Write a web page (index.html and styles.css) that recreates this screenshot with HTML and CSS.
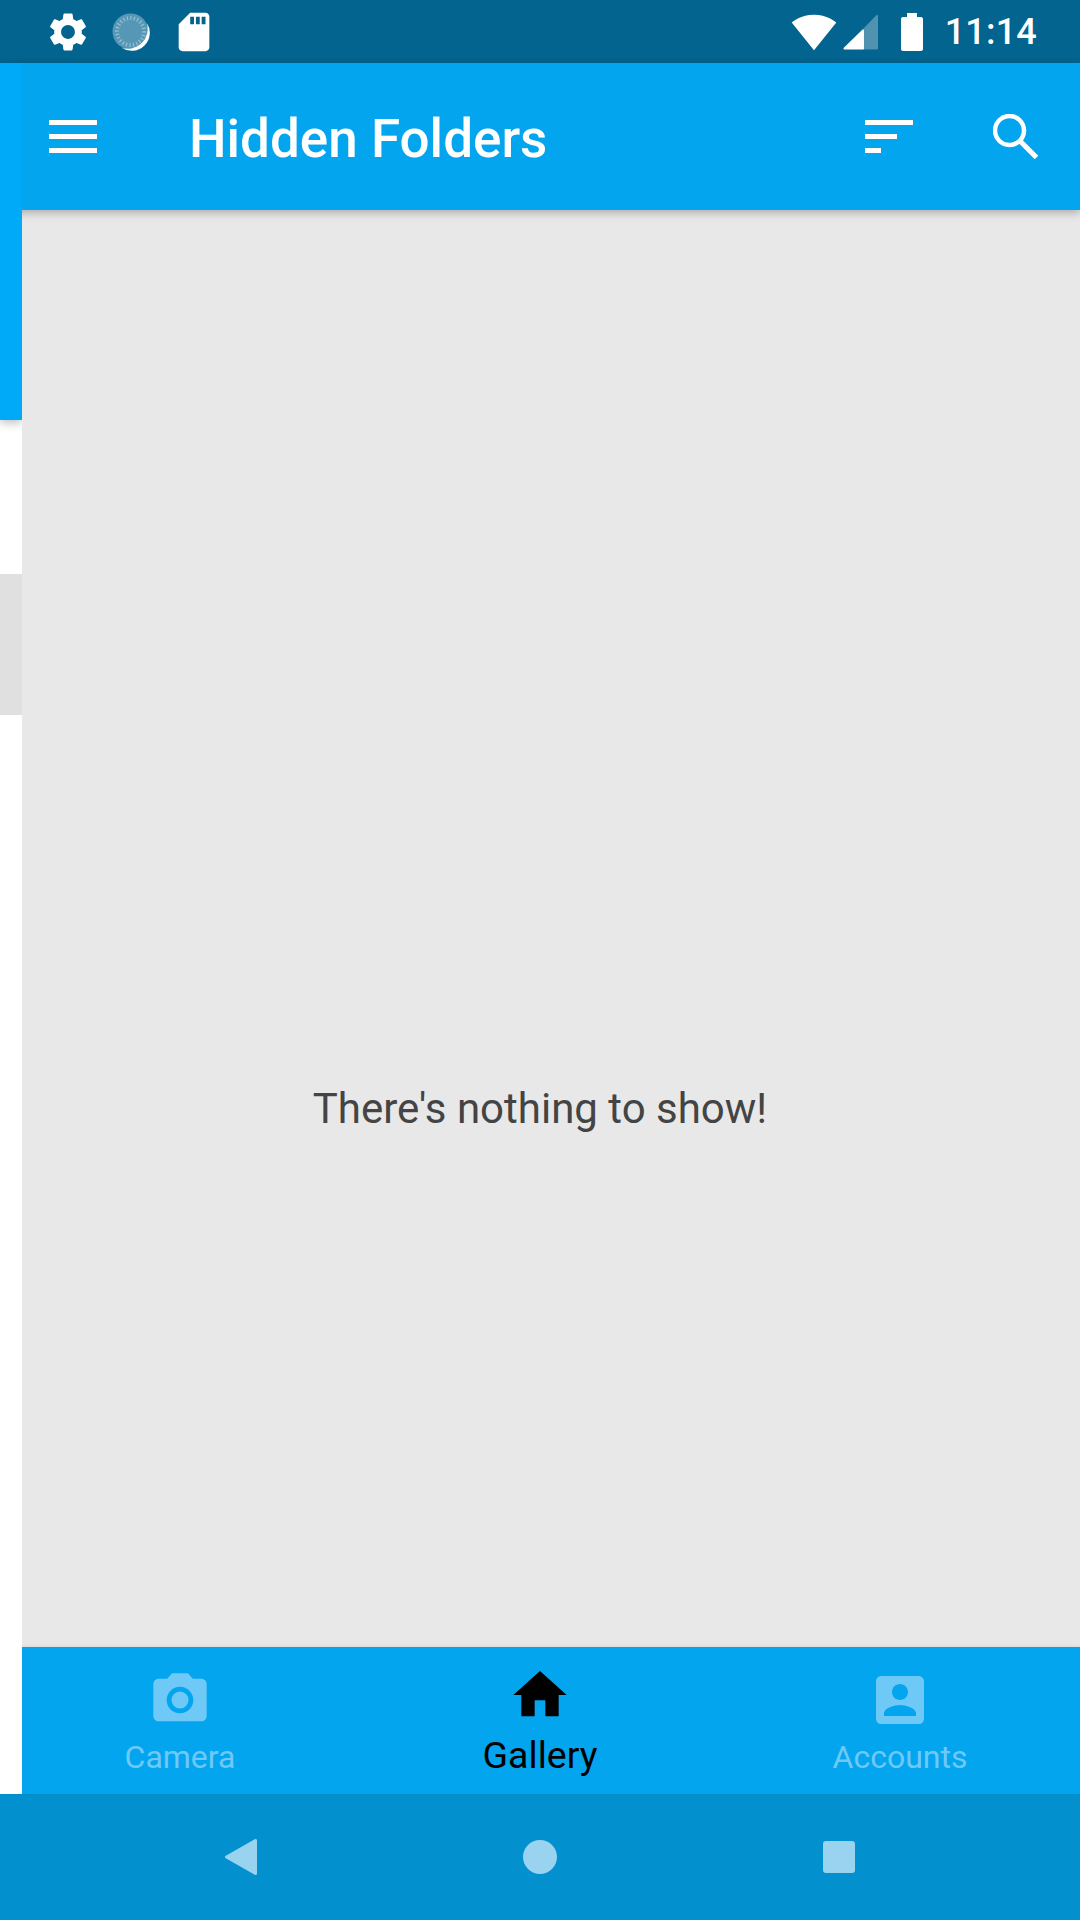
FILE: index.html
```html
<!DOCTYPE html>
<html lang="en">
    <head>
        <meta charset="UTF-8" />
        <meta name="viewport" content="width=device-width, initial-scale=1.0" />
        <title>Hidden Folders</title>
        <link rel="stylesheet" href="styles.css">
    </head>
    <body>
        <section class="screen">
            <header class="status-bar">
                <div class="status-left">
                    <svg class="status-icon" viewBox="0 0 24 24"><path d="M19.14 12.94c.04-.3.06-.61.06-.94 0-.32-.02-.64-.07-.94l2.03-1.58c.18-.14.23-.41.12-.61l-1.92-3.32c-.12-.22-.37-.29-.59-.22l-2.39.96c-.5-.38-1.03-.7-1.62-.94l-.36-2.54c-.04-.24-.24-.41-.48-.41h-3.84c-.24 0-.43.17-.47.41l-.36 2.54c-.59.24-1.13.57-1.62.94l-2.39-.96c-.22-.08-.47 0-.59.22L2.74 8.87c-.12.21-.08.47.12.61l2.03 1.58c-.05.3-.09.63-.09.94s.02.64.07.94l-2.03 1.58c-.18.14-.23.41-.12.61l1.92 3.32c.12.22.37.29.59.22l2.39-.96c.5.38 1.03.7 1.62.94l.36 2.54c.05.24.24.41.48.41h3.84c.24 0 .44-.17.47-.41l.36-2.54c.59-.24 1.13-.56 1.62-.94l2.39.96c.22.08.47 0 .59-.22l1.92-3.32c.12-.22.07-.47-.12-.61l-2.01-1.58zM12 15.6c-1.98 0-3.6-1.62-3.6-3.6s1.62-3.6 3.6-3.6 3.6 1.62 3.6 3.6-1.62 3.6-3.6 3.6z"/></svg>
                    <svg class="status-icon" viewBox="0 0 46 46">
                        <circle cx="22.500" cy="22.500" r="18" fill="#fff" opacity="0.33"/>
                        <path d="M38.700 13.700A18 18 0 0 1 13.700 38.700A19.800 19.800 0 0 0 38.700 13.700z"/>
                        <circle cx="22.500" cy="22.500" r="13.500" fill="none" stroke="#fff" stroke-width="4" stroke-dasharray="1.200 2.300" opacity="0.4"/>
                    </svg>
                    <svg class="status-icon" viewBox="0 0 24 24"><path d="M18 2h-8L4.02 8 4 20c0 1.1.9 2 2 2h12c1.1 0 2-.9 2-2V4c0-1.1-.9-2-2-2zm-6 6h-2V4h2v4zm3 0h-2V4h2v4zm3 0h-2V4h2v4z"/></svg>
                </div>
                <div class="status-right">
                    <svg class="wifi" viewBox="0 0 24 24"><path d="M12.01 21.49L23.64 7c-.45-.34-4.93-4-11.64-4C5.28 3 .81 6.66.36 7l11.63 14.49.01.01.01-.01z"/></svg>
                    <svg class="signal" viewBox="0 0 36 36">
                        <path d="M20 16.500L1.500 34.500H20z" stroke="#fff" stroke-width="2" stroke-linejoin="round"/>
                        <path d="M20 16.500L34 2v32.500H20z" stroke="#fff" stroke-width="2" stroke-linejoin="round" opacity="0.3"/>
                    </svg>
                    <svg class="battery" viewBox="0 0 22 38"><path d="M6 0h10v4h4c1.100 0 2 .9 2 2v30c0 1.100-.9 2-2 2H2c-1.100 0-2-.9-2-2V6c0-1.100.9-2 2-2h4z"/></svg>
                    <span class="clock">11:14</span>
                </div>
            </header>

            <div class="app">
                <div class="toolbar">
                    <div class="menu-icon">
                        <span class="bar"></span>
                        <span class="bar"></span>
                        <span class="bar"></span>
                    </div>
                    <h1>Hidden Folders</h1>
                    <div class="sort-icon">
                        <span class="bar"></span>
                        <span class="bar mid"></span>
                        <span class="bar short"></span>
                    </div>
                    <svg class="search-icon" viewBox="0 0 46 46">
                        <circle cx="16.500" cy="16.500" r="14.500" fill="none" stroke="#fff" stroke-width="4.500"/>
                        <path d="M27 27L43.500 43.500" fill="none" stroke="#fff" stroke-width="5"/>
                    </svg>
                </div>
                <main class="content">
                    <p>There's nothing to show!</p>
                </main>
                <nav class="tabs">
                    <div class="tab">
                        <svg viewBox="0 0 24 24"><circle cx="12" cy="12" r="3.200"/><path d="M9 2L7.170 4H4c-1.100 0-2 .9-2 2v12c0 1.100.9 2 2 2h16c1.100 0 2-.9 2-2V6c0-1.100-.9-2-2-2h-3.170L15 2H9zm3 15c-2.760 0-5-2.240-5-5s2.240-5 5-5 5 2.240 5 5-2.240 5-5 5z"/></svg>
                        <span>Camera</span>
                    </div>
                    <div class="tab active">
                        <svg viewBox="0 0 24 24"><path d="M10 20v-6h4v6h5v-8h3L12 3 2 12h3v8z"/></svg>
                        <span>Gallery</span>
                    </div>
                    <div class="tab">
                        <svg viewBox="0 0 24 24"><path d="M3 5v14c0 1.100.89 2 2 2h14c1.100 0 2-.9 2-2V5c0-1.100-.9-2-2-2H5c-1.110 0-2 .9-2 2zm12 4c0 1.660-1.340 3-3 3s-3-1.340-3-3 1.340-3 3-3 3 1.340 3 3zm-9 8c0-2 4-3.100 6-3.100s6 1.100 6 3.100v1H6v-1z"/></svg>
                        <span>Accounts</span>
                    </div>
                </nav>
                <!-- drawer nearly closed, only its edge is showing -->
                <aside class="drawer">
                    <div class="drawer-head"></div>
                    <div class="drawer-item"></div>
                </aside>
            </div>

            <footer class="nav-bar">
                <svg class="back" viewBox="0 0 32 36"><path d="M30.500 1.500V34.500L1.500 18z" stroke-width="3" stroke-linejoin="round"/></svg>
                <svg viewBox="0 0 36 36"><circle cx="18" cy="18" r="17"/></svg>
                <svg viewBox="0 0 36 36"><rect x="2" y="2" width="32" height="32" rx="3"/></svg>
            </footer>
        </section>
    </body>
</html>
```

FILE: styles.css
```css
* {
    padding: 0;
    margin: 0;
    box-sizing: border-box;
}
body {
    width: 1080px;
    height: 1920px;
    overflow: hidden;
    font-family: Roboto, "Noto Sans", sans-serif;
    background-color: #fff;
}
.screen {
    display: flex;
    flex-direction: column;
    height: 1920px;
}

/* status bar */
.status-bar {
    display: flex;
    justify-content: space-between;
    align-items: center;
    height: 63px;
    padding: 0 43px 0 45px;
    background-color: #02648f;
    fill: #fff;
}
.status-left,
.status-right {
    display: flex;
    align-items: center;
}
.status-left {
    gap: 17px;
}
.status-icon {
    width: 46px;
    height: 46px;
}
.wifi {
    width: 46px;
    height: 46px;
}
.signal {
    width: 36px;
    height: 36px;
    margin: 1px 0 0 6px;
}
.battery {
    width: 22px;
    height: 38px;
    margin-left: 22px;
}
.clock {
    margin-left: 22px;
    font-size: 36px;
    font-weight: 500;
    letter-spacing: 0.2px;
    color: #fff;
}

/* app */
.app {
    position: relative;
    flex: 1;
    display: flex;
    flex-direction: column;
}
.toolbar {
    position: relative;
    z-index: 1;
    display: flex;
    align-items: center;
    height: 147px;
    padding-left: 49px;
    background-color: #03a5ef;
    box-shadow: 0 3px 8px rgba(0, 0, 0, 0.25);
}
.toolbar h1 {
    margin: 4px 0 0 92px;
    font-size: 53px;
    font-weight: 500;
    color: #fff;
}
.bar {
    display: block;
    height: 5.500px;
    background-color: #fff;
}
.menu-icon,
.sort-icon {
    display: flex;
    flex-direction: column;
    gap: 8.500px;
    width: 48px;
}
.sort-icon {
    margin-left: auto;
}
.sort-icon .mid {
    width: 32px;
}
.sort-icon .short {
    width: 16px;
}
.search-icon {
    width: 46px;
    height: 46px;
    margin: 0 41px 0 80px;
}

.content {
    flex: 1;
    display: flex;
    justify-content: center;
    align-items: center;
    padding-top: 359px;
    background-color: #e8e8e8;
}
.content p {
    font-size: 42px;
    color: #444;
}

/* tabs */
.tabs {
    display: grid;
    grid-template-columns: repeat(3, 1fr);
    height: 147px;
    background-color: #03a5ef;
    box-shadow: 0 -1px 3px rgba(0, 0, 0, 0.08);
}
.tab {
    display: flex;
    flex-direction: column;
    align-items: center;
    padding-top: 21px;
    font-size: 32px;
    line-height: 42px;
    color: #6fc9f7;
    fill: #6fc9f7;
}
.tab svg {
    width: 64px;
    height: 64px;
}
.tab span {
    margin-top: 4px;
}
.tab.active {
    padding-top: 16px;
    font-size: 37.500px;
    color: #000;
    fill: #000;
}
.tab.active span {
    margin-top: 7px;
}

/* drawer */
.drawer {
    position: absolute;
    z-index: 2;
    top: 0;
    bottom: 0;
    left: 0;
    width: 22px;
    overflow: hidden;
    background-color: #fff;
}
.drawer-head {
    height: 357px;
    background-color: #00aaf9;
    box-shadow: 0 3px 10px rgba(0, 0, 0, 0.25);
}
.drawer-item {
    height: 141px;
    margin-top: 154px;
    background-color: #e0e0e0;
}

/* nav bar */
.nav-bar {
    display: grid;
    grid-template-columns: repeat(3, 1fr);
    justify-items: center;
    align-items: center;
    height: 126px;
    padding: 0 92px;
    background-color: #0390ce;
    fill: #9ad3ef;
    stroke: #9ad3ef;
}
.nav-bar svg {
    width: 36px;
    height: 36px;
    stroke: none;
}
.nav-bar .back {
    width: 32px;
    stroke: #9ad3ef;
}
```
